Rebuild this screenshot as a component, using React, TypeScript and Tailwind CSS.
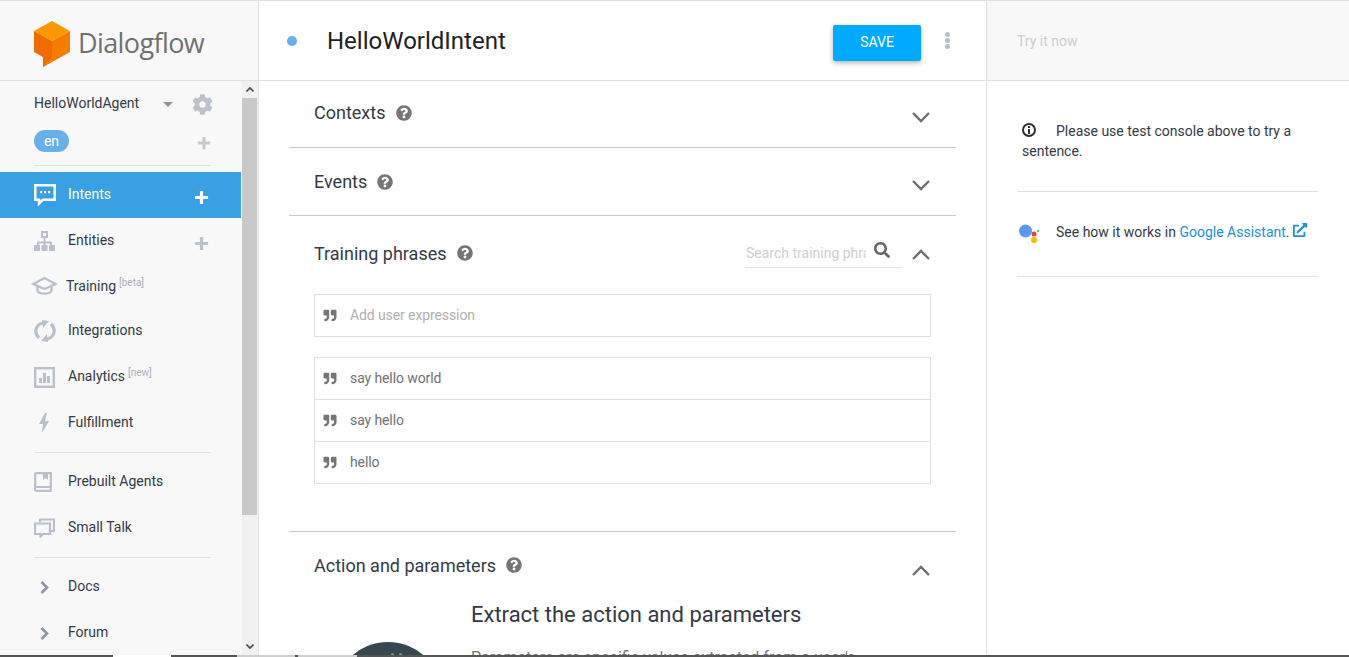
import React from "react";
import { FaQuestionCircle, FaQuoteRight, FaCog, FaSearch, FaExternalLinkAlt } from "react-icons/fa";

function Plus({ className }: { className: string }) {
  return (
    <svg viewBox="0 0 16 16" className={className} fill="none" stroke="currentColor" strokeWidth="3.4">
      <path d="M8 1v14M1 8h14" />
    </svg>
  );
}

function Chevron({ up, className, weight = 2.4 }: { up?: boolean; className: string; weight?: number }) {
  return (
    <svg viewBox="0 0 18 11" className={className} fill="none" stroke="currentColor" strokeWidth={weight}>
      <path d={up ? "M1 10l8-8 8 8" : "M1 1l8 8 8-8"} />
    </svg>
  );
}

function ChevronRight({ className }: { className: string }) {
  return (
    <svg viewBox="0 0 9 13" className={className} fill="none" stroke="currentColor" strokeWidth="2.6">
      <path d="M1.5 1l5.5 5.5L1.5 12" />
    </svg>
  );
}

function Logo() {
  return (
    <svg viewBox="0 0 36 46" className="h-[46px] w-[36px] shrink-0">
      <path d="M18 0L36 10L18 20L0 10Z" fill="#ff9800" />
      <path d="M0 10L18 20V40L9 46V36L0 31Z" fill="#ef6c00" />
      <path d="M18 20L36 10V31L9 46L18 36Z" fill="#f57c00" />
    </svg>
  );
}

const iconColor = "text-[#bac0cb]";

function ChatIcon({ className }: { className: string }) {
  return (
    <svg viewBox="0 0 22 22" className={className} fill="none">
      <path d="M1.300 1.300h19.400v14.400H9l-4 4v-4H1.300z" stroke="currentColor" strokeWidth="2.500" />
      <path d="M6 7h2.200v2.200H6zM10 7h2.200v2.200H10zM14 7h2.200v2.200H14z" fill="currentColor" />
    </svg>
  );
}
function SitemapIcon({ className }: { className: string }) {
  return (
    <svg viewBox="0 0 21 20" className={className} fill="currentColor">
      <path fillRule="evenodd" d="M7 0h7v7H7zM9 2v3h3V2z" />
      <path d="M9.500 7h2v3.500H18V14h-2v-1.500h-4.500V14h-2v-1.500H5V14H3v-3.500h6.500z" />
      <path d="M0 14h6v6H0zM7.500 14h6v6h-6zM15 14h6v6h-6z" />
    </svg>
  );
}
function CapIcon({ className }: { className: string }) {
  return (
    <svg viewBox="0 0 26 20" className={className} fill="none" stroke="currentColor" strokeWidth="2.400">
      <path d="M13 2L2 8l11 5 11-5z" />
      <path d="M6 10v5c2 3.500 12 3.500 14 0v-5" />
    </svg>
  );
}
function SyncIcon({ className }: { className: string }) {
  return (
    <svg viewBox="0 0 22 22" className={className} fill="none">
      <path d="M5 18C-1 12 2 3 11 3" stroke="currentColor" strokeWidth="3.200" />
      <path d="M8 0l7 1-6 7z" fill="currentColor" />
      <path d="M17 4c6 6 3 15-6 15" stroke="currentColor" strokeWidth="3.200" />
      <path d="M14 22l-7-1 6-7z" fill="currentColor" />
    </svg>
  );
}
function ChartIcon({ className }: { className: string }) {
  return (
    <svg viewBox="0 0 21 21" className={className} fill="none">
      <rect x="1.200" y="1.200" width="18.600" height="18.600" stroke="currentColor" strokeWidth="2.400" />
      <path d="M5 11h3v5H5zM9 6h3v10H9zM13 9h3v7h-3z" fill="currentColor" />
    </svg>
  );
}
function BookIcon({ className }: { className: string }) {
  return (
    <svg viewBox="0 0 19 20" className={className} fill="none">
      <path d="M1.200 16V2.200a1 1 0 011-1h14.600v17.600H3a1.800 1.800 0 01-1.800-2.800zM1.500 15h15" stroke="currentColor" strokeWidth="2.200" />
      <path d="M9 1h5v7l-2.500-2L9 8z" fill="currentColor" />
    </svg>
  );
}
function TalkIcon({ className }: { className: string }) {
  return (
    <svg viewBox="0 0 21 20" className={className} fill="none" stroke="currentColor" strokeWidth="2.200">
      <path d="M6 4V1.500h14V13h-3" />
      <path d="M1 5.500h15V16H9l-2.500 2.500V16H1z" />
    </svg>
  );
}
function BoltIcon({ className }: { className: string }) {
  return (
    <svg viewBox="0 0 12 20" className={className} fill="currentColor">
      <path d="M7 0L1 11h4L4 20l7-12H7l2-8z" />
    </svg>
  );
}

function NavRow({ icon, label, sup, plus, active, tight }: { icon: React.ReactNode; label: string; sup?: string; plus?: boolean; active?: boolean; tight?: boolean }) {
  return (
    <div className={`flex shrink-0 items-center pl-[34px] pr-[32px] text-[14px] ${tight ? "h-[44px]" : "h-[46px]"} ${active ? "bg-[#39a1e3] text-white" : "text-[#333a45]"}`}>
      <span className={`flex shrink-0 items-center ${tight ? "w-[32px]" : "w-[34px]"}`}>{icon}</span>
      <span className={tight ? "" : "-mt-[2px]"}>
        {label}
        {sup && <sup className="relative top-[1px] ml-[3px] align-super text-[10px] leading-none text-[#a8adb5]">{sup}</sup>}
      </span>
      {plus && <Plus className={`ml-auto mt-[4px] h-[15px] w-[15px] ${active ? "text-white" : "text-[#bdc1c9]"}`} />}
    </div>
  );
}

function SectionHead({ title, h, pt, gap, children }: { title: string; h: string; pt: string; gap: string; children: React.ReactNode }) {
  return (
    <div className={`flex ${h} shrink-0 items-start border-b border-[#c8c8c8] px-[25px] ${pt}`}>
      <div className={`flex items-center ${gap} text-[18px] leading-[24px] text-[#333a45]`}>
        {title}
        <FaQuestionCircle className="h-[16px] w-[16px] text-[#757575]" />
      </div>
      <div className="ml-auto">{children}</div>
    </div>
  );
}

function Phrase({ text, muted, last }: { text: string; muted?: boolean; last?: boolean }) {
  return (
    <div className={`flex items-center px-[8px] text-[14px] tracking-[-0.1px] ${last ? "h-[41px]" : "h-[42px] border-b border-[#e0e0e0]"} ${muted ? "text-[#b0b0b0]" : "text-[#6f7174]"}`}>
      <FaQuoteRight className="mr-[13px] h-[13px] w-[14px] text-[#757575]" />
      {text}
    </div>
  );
}

export default function App() {
  return (
    <div className="flex h-[657px] w-[1349px] flex-col overflow-hidden bg-white font-['Roboto',sans-serif]">
      <div className="flex h-[655px] border-t border-[#e0e0e0]">
        {/* Sidebar */}
        <aside className="flex w-[259px] shrink-0 flex-col border-r border-[#e0e0e0] bg-[#f8f8f8]">
          <div className="flex h-[80px] shrink-0 items-center gap-[8px] border-b border-[#e0e0e0] pl-[34px] pt-[7px]">
            <Logo />
            <span className="-mt-[2px] font-['Open_Sans',sans-serif] text-[27px] tracking-[-0.6px] text-[#707070]">Dialogflow</span>
          </div>
          <div className="flex min-h-0 flex-1">
            <div className="flex w-[241px] shrink-0 flex-col overflow-hidden">
              <div className="flex h-[45px] shrink-0 items-center pb-[1px] pl-[34px] pr-[28px] text-[14px] text-[#333a45]">
                HelloWorldAgent
                <span className="ml-[24px] mt-[3px] h-0 w-0 border-x-[5px] border-t-[5px] border-x-transparent border-t-[#90959e]" />
                <FaCog className="ml-auto mt-[2px] h-[21px] w-[21px] text-[#bdc1c9]" />
              </div>
              <div className="flex h-[39px] shrink-0 items-start pl-[34px] pr-[30px] pt-[4px]">
                <span className="flex h-[22px] w-[35px] items-center justify-center rounded-full bg-[#67b0e9] text-[14px] text-white">en</span>
                <Plus className="ml-auto mt-[6px] h-[14px] w-[14px] text-[#c5c8cf]" />
              </div>
              <div className="ml-[34px] mr-[30px] h-px shrink-0 bg-[#e0e0e0]" />
              <div className="h-[6px] shrink-0" />
              <NavRow active icon={<ChatIcon className="h-[22px] w-[22px] text-white" />} label="Intents" plus />
              <NavRow icon={<SitemapIcon className={`h-[20px] w-[21px] ${iconColor}`} />} label="Entities" plus />
              <NavRow tight icon={<CapIcon className={`-ml-[3px] h-[20px] w-[27px] ${iconColor}`} />} label="Training" sup="[beta]" />
              <NavRow icon={<SyncIcon className={`h-[22px] w-[22px] ${iconColor}`} />} label="Integrations" />
              <NavRow icon={<ChartIcon className={`h-[21px] w-[21px] ${iconColor}`} />} label="Analytics" sup="[new]" />
              <NavRow icon={<BoltIcon className={`ml-[4px] h-[20px] w-[12px] ${iconColor}`} />} label="Fulfillment" />
              <div className="ml-[34px] mr-[30px] mt-[6px] h-px shrink-0 bg-[#e0e0e0]" />
              <div className="h-[6px] shrink-0" />
              <NavRow icon={<BookIcon className={`h-[20px] w-[19px] ${iconColor}`} />} label="Prebuilt Agents" />
              <NavRow icon={<TalkIcon className={`h-[20px] w-[21px] ${iconColor}`} />} label="Small Talk" />
              <div className="ml-[34px] mr-[30px] mt-[6px] h-px shrink-0 bg-[#e0e0e0]" />
              <div className="h-[6px] shrink-0" />
              <NavRow icon={<ChevronRight className="ml-[6px] h-[13px] w-[9px] text-[#8f95a0]" />} label="Docs" />
              <NavRow icon={<ChevronRight className="ml-[6px] h-[13px] w-[9px] text-[#8f95a0]" />} label="Forum" />
            </div>
            {/* scrollbar */}
            <div className="ml-px flex w-[16px] flex-col bg-[#f1f1f1]">
              <div className="flex h-[17px] shrink-0 items-center justify-center">
                <Chevron up weight={4} className="h-[5px] w-[8px] text-[#505050]" />
              </div>
              <div className="h-[417px] w-[15px] shrink-0 bg-[#c8c8c8]" />
              <div className="mt-auto flex h-[17px] shrink-0 items-center justify-center">
                <Chevron weight={4} className="h-[5px] w-[8px] text-[#505050]" />
              </div>
            </div>
          </div>
        </aside>

        {/* Main */}
        <main className="flex w-[728px] shrink-0 flex-col border-r border-[#e0e0e0]">
          <div className="flex h-[80px] shrink-0 items-center border-b border-[#e0e0e0] pl-[28px]">
            <span className="h-[10px] w-[10px] rounded-full bg-[#66b0ec]" />
            <span className="ml-[30px] text-[24px] text-[#202124]">HelloWorldIntent</span>
            <button className="ml-auto mt-[4px] flex h-[36px] w-[88px] items-center justify-center rounded-[2px] bg-[#00aaff] text-[14px] text-white shadow-[0_2px_5px_rgba(0,0,0,0.3)]">SAVE</button>
            <span className="ml-[24px] mr-[36px] flex flex-col gap-[1px]">
              <span className="h-[5px] w-[5px] rounded-full bg-[#b9bfc9]" />
              <span className="h-[5px] w-[5px] rounded-full bg-[#b9bfc9]" />
              <span className="h-[5px] w-[5px] rounded-full bg-[#b9bfc9]" />
            </span>
          </div>
          <div className="mx-[30px] flex min-h-0 flex-1 flex-col overflow-hidden">
            <SectionHead title="Contexts" h="h-[67px]" pt="pt-[20px]" gap="gap-[11px]">
              <Chevron className="mr-[1px] mt-[11px] h-[11px] w-[18px] text-[#6e6e6e]" />
            </SectionHead>
            <SectionHead title="Events" h="h-[68px]" pt="pt-[22px]" gap="gap-[10px]">
              <Chevron className="mr-[1px] mt-[10px] h-[11px] w-[18px] text-[#6e6e6e]" />
            </SectionHead>
            <div className="h-[316px] shrink-0 border-b border-[#c8c8c8] px-[25px] pt-[25px]">
              <div className="flex h-[24px] items-center text-[18px] text-[#333a45]">
                <span>Training phrases</span>
                <FaQuestionCircle className="ml-[10px] h-[16px] w-[16px] text-[#757575]" />
                <div className="ml-auto flex h-[30px] w-[157px] items-center border-b border-[#e0e0e0] pl-[1px]">
                  <span className="mt-[2px] w-[120px] overflow-hidden whitespace-nowrap text-[14px] text-[#cfcfcf]">Search training phrases</span>
                  <FaSearch className="ml-[8px] -mt-[5px] h-[16px] w-[16px] text-[#666]" />
                </div>
                <Chevron up className="ml-[10px] mr-[1px] mt-[2px] h-[11px] w-[18px] text-[#6e6e6e]" />
              </div>
              <div className="mt-[29px] w-[617px] border border-[#e0e0e0]">
                <Phrase text="Add user expression" muted last />
              </div>
              <div className="mt-[20px] w-[617px] border border-[#e0e0e0]">
                <Phrase text="say hello world" />
                <Phrase text="say hello" />
                <Phrase text="hello" last />
              </div>
            </div>
            <div className="shrink-0 px-[25px] pt-[21px]">
              <div className="flex h-[24px] items-center text-[18px] text-[#333a45]">
                <span>Action and parameters</span>
                <FaQuestionCircle className="ml-[10px] h-[16px] w-[16px] text-[#757575]" />
                <Chevron up className="ml-auto mr-[1px] mt-[10px] h-[11px] w-[18px] text-[#6e6e6e]" />
              </div>
              <div className="mt-[25px] flex">
                <div className="w-[157px] shrink-0 pl-[20px] pt-[40px]">
                  <div className="relative h-[108px] w-[108px] rounded-full bg-[#37474f]">
                    <span className="absolute left-[57px] top-[11px] h-[3px] w-[3px] rounded-full bg-[#78909c]" />
                    <span className="absolute left-[65px] top-[11px] h-[3px] w-[3px] rounded-full bg-[#78909c]" />
                  </div>
                </div>
                <div className="flex-1">
                  <h2 className="text-[22px] leading-[26px] text-[#333a45]">Extract the action and parameters</h2>
                  <p className="mt-[18px] whitespace-nowrap text-[16px] leading-[24px] text-[#757575]">Parameters are specific values extracted from a user's</p>
                </div>
              </div>
            </div>
          </div>
        </main>

        {/* Right panel */}
        <section className="flex flex-1 flex-col">
          <div className="flex h-[80px] shrink-0 items-center border-b border-[#e0e0e0] bg-[#f8f8f8] pl-[30px] pt-[2px] text-[14px] text-[#cccccc]">Try it now</div>
          <div className="mx-[30px] w-[301px] text-[14px] leading-[20px] text-[#333a45]">
            <div className="h-[111px] border-b border-[#e0e0e0] pl-[5px] pt-[40px]">
              <svg viewBox="0 0 14 14" className="mr-[20px] inline-block h-[14px] w-[14px] align-[-1px] text-[#2b2f36]" fill="none">
                <circle cx="7" cy="7" r="6" stroke="currentColor" strokeWidth="2" />
                <path d="M6 3h2v2H6zM6 6h2v5H6z" fill="currentColor" />
              </svg>
              Please use test console above to try a sentence.
            </div>
            <div className="flex h-[85px] items-start border-b border-[#e0e0e0] pt-[30px]">
              <svg viewBox="0 0 22 22" className="mt-[1px] h-[22px] w-[22px] shrink-0">
                <circle cx="8.500" cy="8" r="6.500" fill="#5e97f6" />
                <circle cx="17" cy="11" r="2.500" fill="#ea4335" />
                <circle cx="21" cy="8" r="1" fill="#34a853" />
                <circle cx="17" cy="17" r="3" fill="#fbbc05" />
              </svg>
              <span className="ml-[17px] whitespace-nowrap">
                See how it works in <span className="text-[#1a8fe3]">Google Assistant</span>.
                <FaExternalLinkAlt className="ml-[3px] inline-block h-[14px] w-[14px] align-[0px] text-[#1a8fe3]" />
              </span>
            </div>
          </div>
        </section>
      </div>

      {/* Window strip along the bottom edge */}
      <div className="flex h-[2px] shrink-0 bg-[#555555]">
        <div className="ml-[113px] w-[58px] bg-white" />
        <div className="ml-[66px] w-[58px] bg-[#cfcfcf]" />
        <div className="ml-[3px] w-[59px] bg-[#cfcfcf]" />
      </div>
    </div>
  );
}
